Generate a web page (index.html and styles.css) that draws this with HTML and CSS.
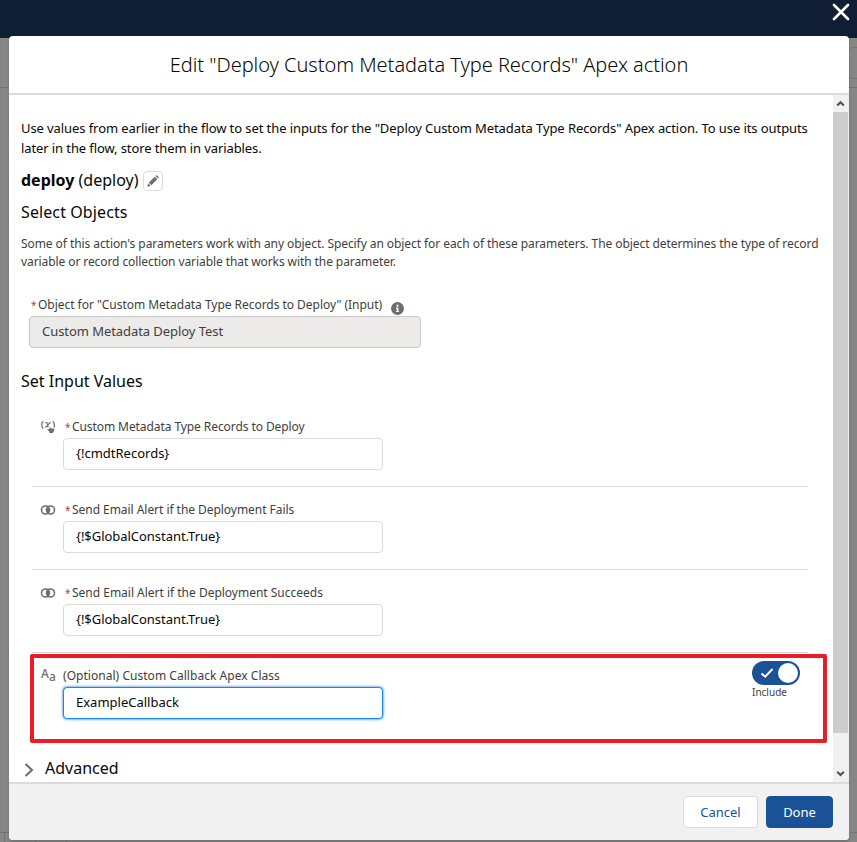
FILE: index.html
```
<!DOCTYPE html>
<html lang="en">
<head>
<meta charset="utf-8">
<title>Edit Apex action</title>
<link rel="stylesheet" href="styles.css">
</head>
<body>
<div class="page-header"></div>
<div class="toolbar-line"></div>
<div class="toolbar-button"></div>
<div class="page-footer"><i></i><i></i><i></i></div>
<svg class="close" viewBox="0 0 18 18"><path d="M2 2l14 14M16 2L2 16"/></svg>
<main class="modal">
  <header class="modal-header"><h1>Edit "Deploy Custom Metadata Type Records" Apex action</h1></header>
  <div class="modal-body">
    <section class="content">
      <p class="intro"><span class="l1">Use values from earlier in the flow to set the inputs for the "Deploy Custom Metadata Type Records" Apex action. To use its outputs</span><br><span class="l2">later in the flow, store them in variables.</span></p>
      <div class="action-name"><span class="name"><b>deploy</b> (deploy)</span>
        <button class="edit" aria-label="Edit"><svg viewBox="0 0 12 12"><path d="M.3 11.7l.9-3.4 2.5 2.5zM1.8 7.6L7.7 1.7l2.6 2.6-5.9 5.9zM8.4 1L9 .4q.5-.4 1 0l1.6 1.6q.4.5 0 1l-.6.6z"/></svg></button>
      </div>
      <h2 class="select">Select Objects</h2>
      <p class="help"><span class="l1">Some of this action's parameters work with any object. Specify an object for each of these parameters. The object determines the type of record</span><br><span class="l2">variable or record collection variable that works with the parameter.</span></p>
      <div class="object">
        <label><em>*</em><span class="object-label">Object for "Custom Metadata Type Records to Deploy" (Input)</span>
          <svg class="info" viewBox="0 0 12 12"><circle cx="6" cy="6" r="6"/><path d="M5.1 2.6h1.8v1.6H5.1zM4.6 5h2.2v3.2h.7v1H4.6v-1h.6V6h-.6z"/></svg></label>
        <div class="input disabled"><span>Custom Metadata Deploy Test</span></div>
      </div>
      <h2 class="values">Set Input Values</h2>
      <div class="rows">
        <div class="row">
          <svg class="type" viewBox="0 0 16 14"><g class="stroke"><path d="M3.200 1.200Q.2 5 3.200 8.800M12.800 1.200Q15.200 4 14 7.500M5.400 2.700q1.300-.7 1.800.8l1 3.500M10.700 2.600Q9.500 2.400 8.300 4.500L6.700 6.500q-.8.8-1.700.3"/></g><path d="M7.200 9.600q.4-1 1.400-.5l.8.4V7.600h1.500v.9h3.300v2.300l-1.200 1.200v1H9.400v-1.200z"/></svg>
          <div class="field"><label><em>*</em><span class="t1">Custom Metadata Type Records to Deploy</span></label><div class="input v1"><span>{!cmdtRecords}</span></div></div>
        </div>
        <div class="row">
          <svg class="type" viewBox="0 0 16 14"><g class="rings"><circle cx="5.500" cy="7" r="4"/><circle cx="10.500" cy="7" r="4"/></g><path d="M8 3.5Q5.6 7 8 10.5 10.4 7 8 3.5z"/></svg>
          <div class="field"><label><em>*</em><span class="t2">Send Email Alert if the Deployment Fails</span></label><div class="input v2"><span>{!$GlobalConstant.True}</span></div></div>
        </div>
        <div class="row">
          <svg class="type" viewBox="0 0 16 14"><g class="rings"><circle cx="5.500" cy="7" r="4"/><circle cx="10.500" cy="7" r="4"/></g><path d="M8 3.5Q5.6 7 8 10.5 10.4 7 8 3.5z"/></svg>
          <div class="field"><label><em>*</em><span class="t3">Send Email Alert if the Deployment Succeeds</span></label><div class="input v2"><span>{!$GlobalConstant.True}</span></div></div>
        </div>
        <div class="row last">
          <span class="type text-type">A<sub>a</sub></span>
          <div class="field"><label><span class="t4">(Optional) Custom Callback Apex Class</span></label><div class="input focus v3"><span>ExampleCallback</span></div></div>
          <div class="include">
            <div class="toggle"><svg viewBox="0 0 14 12"><path d="M1.5 6.5l3.7 3.2L12.5 2"/></svg><i></i></div>
            <span>Include</span>
          </div>
          <div class="highlight"></div>
        </div>
      </div>
      <div class="advanced"><svg viewBox="0 0 10 14"><path d="M1.5 1L8 7l-6.500 6"/></svg><span>Advanced</span></div>
    </section>
    <div class="scrollbar">
      <svg viewBox="0 0 15 17"><path d="M4.200 10.500L7.500 7.200l3.300 3.300"/></svg>
      <div class="thumb"></div>
      <svg class="down" viewBox="0 0 15 17"><path d="M4.200 6.700L7.500 10l3.300-3.300"/></svg>
    </div>
  </div>
  <footer class="modal-footer"><button class="cancel"><span>Cancel</span></button><button class="done"><span>Done</span></button></footer>
</main>
</body>
</html>
```
FILE: styles.css
```
* { box-sizing: border-box; }
body { margin: 0; width: 857px; height: 842px; overflow: hidden; position: relative; background: #868686; color: #080707; font: 13px/20px "Noto Sans", "Open Sans", sans-serif; }
h1, h2, p { margin: 0; font-weight: 400; }
button { font: inherit; padding: 0; }
svg { display: block; }
.page-header { height: 38px; background: #0f1e35; }
.toolbar-line { height: 50px; border-bottom: 1px solid #747474; }
.toolbar-button { position: absolute; left: 848px; top: 47px; width: 20px; height: 32px; border: 1px solid #747474; border-radius: 4px; }
.page-footer { position: absolute; left: 0; top: 832px; width: 100%; height: 10px; border-top: 1px solid #747474; display: flex; }
.page-footer i { width: 31px; border-right: 1px solid #747474; }
.page-footer i:first-child { width: 5px; }
.close { position: absolute; left: 832px; top: 3px; width: 18px; height: 18px; fill: none; stroke: #fff; stroke-width: 2.6; stroke-linecap: round; }
.modal { position: absolute; left: 9px; top: 36px; width: 840px; height: 804px; background: #fff; border-radius: 4px; overflow: hidden; display: flex; flex-direction: column; box-shadow: 0 2px 3px rgba(0,0,0,.16); }
.modal-header { height: 59px; border-bottom: 2px solid #dddbda; text-align: center; }
h1 { font-size: 20px; line-height: 25px; font-weight: 300; padding-top: 16px; letter-spacing: -.04px; white-space: nowrap; }
.modal-body { height: 687px; display: flex; overflow: hidden; }
.content { flex: 1; padding: 23px 0 0 12px; white-space: nowrap; }
.intro { height: 52px; }
.intro .l1 { letter-spacing: -.085px; }
.intro .l2 { letter-spacing: -.1px; }
.action-name { display: flex; height: 21px; gap: 4px; font-size: 16px; }
.edit { width: 20px; height: 20px; margin-top: 1px; border: 1px solid #dddbda; border-radius: 4px; background: #fff; display: grid; place-items: center; }
.edit svg { width: 12px; height: 12px; fill: #706e6b; }
h2 { font-size: 16px; line-height: 20px; }
.select { margin-top: 11px; letter-spacing: .1px; }
.help { font-size: 12px; line-height: 18px; color: #3e3e3c; margin-top: 13px; }
.help .l1 { letter-spacing: -.07px; }
.help .l2 { letter-spacing: -.085px; }
.object { margin: 24px 0 0 8px; }
label { display: flex; height: 20px; font-size: 12px; line-height: 20px; color: #3e3e3c; }
em { color: #c23934; font-style: normal; font-size: 10px; width: 7px; margin-left: 2px; }
.object label { height: 21px; }
.object-label { letter-spacing: -.035px; }
.info { width: 13px; height: 13px; margin: 7px 0 0 9px; fill: #706e6b; }
.info path { fill: #fff; }
.input { width: 320px; height: 32px; border: 1px solid #dddbda; border-radius: 4px; padding-left: 12px; line-height: 28px; background: #fff; }
.disabled { width: 392px; background: #ecebea; border-color: #c9c7c5; color: #3e3e3c; letter-spacing: -.06px; }
.values { margin-top: 23px; }
.rows { margin: 13px 0 0 11px; width: 776px; }
.row { position: relative; height: 83px; padding: 13px 8px 0; display: flex; border-bottom: 1px solid #dddbda; }
.last { border-color: transparent; }
.type { width: 16px; height: 14px; margin-top: 3px; fill: #706e6b; }
.stroke { fill: none; stroke: #706e6b; stroke-width: 1.200; }
.rings { fill: none; stroke: #706e6b; stroke-width: 1.600; }
.text-type { display: flex; color: #706e6b; font-size: 12px; line-height: 12px; font-weight: 500; padding-left: 1px; margin-top: 2px; }
.text-type sub { font-size: 12px; line-height: 18px; vertical-align: baseline; }
.field { margin-left: 7px; flex: 1; }
.field label { height: 21px; }
.t1 { letter-spacing: -.08px; }
.t2 { letter-spacing: -.045px; }
.t3 { letter-spacing: -.01px; }
.t4 { letter-spacing: .035px; }
.v2 { letter-spacing: -.04px; }
.focus { border-color: #1589ee; box-shadow: 0 0 3px #0070d2; }
.include { width: 48px; margin-top: -5px; color: #3e3e3c; font-size: 10px; line-height: 13px; }
.toggle { height: 24px; border-radius: 12px; background: #1b5297; display: flex; align-items: center; justify-content: space-between; padding: 0 2px 0 8px; margin-bottom: 1px; }
.toggle svg { width: 14px; height: 12px; fill: none; stroke: #fff; stroke-width: 2; }
.toggle i { width: 20px; height: 20px; border-radius: 50%; background: #fff; }
.highlight { position: absolute; left: -2px; top: 1px; width: 797px; height: 89px; border: 4px solid #ed1c24; border-radius: 2px; }
.advanced { display: flex; align-items: center; height: 20px; margin: 22px 0 0 3px; font-size: 16px; gap: 11px; }
.advanced svg { width: 10px; height: 14px; fill: none; stroke: #706e6b; stroke-width: 2; margin-top: 4px; }
.scrollbar { width: 16px; background: #f0f0f0; display: flex; flex-direction: column; }
.scrollbar svg { width: 15px; height: 17px; fill: none; stroke: #505050; stroke-width: 2; }
.thumb { width: 15px; height: 621px; background: #cdcdcd; }
.scrollbar .down { margin-top: auto; }
.modal-footer { height: 58px; border-top: 2px solid #dddbda; background: #f1f1f1; display: flex; justify-content: flex-end; gap: 8px; padding: 12px 16px 0 0; }
.modal-footer button { height: 32px; border: 1px solid #dddbda; border-radius: 4px; }
.modal-footer .cancel { width: 75px; background: #fff; color: #1b5297; }
.modal-footer .done { width: 67px; background: #1b5297; border-color: #1b5297; color: #fff; }
```
